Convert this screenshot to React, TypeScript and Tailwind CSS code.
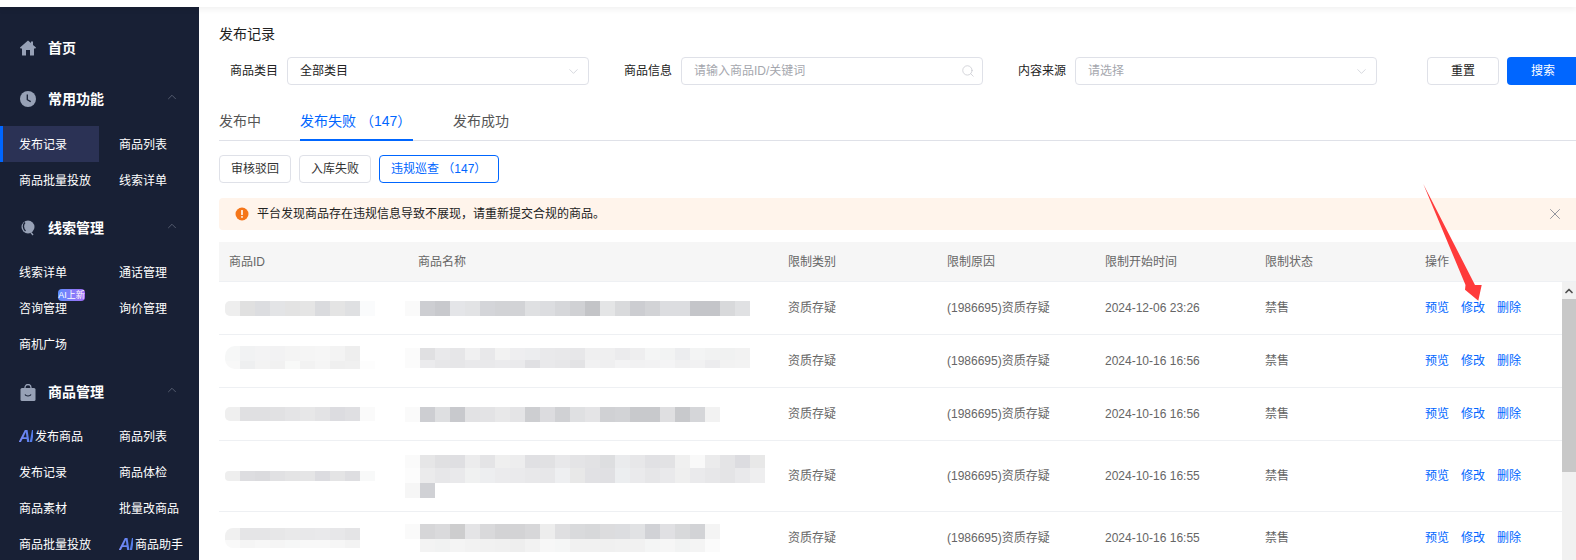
import React from "react";
import { ChevronDown, ChevronUp, Search, X } from "lucide-react";

type Line = [number, string];

const HomeIcon = () => (
  <svg width="16" height="16" viewBox="0 0 16 16" className="shrink-0">
    <path d="M8 .5 11 3.100V1.500h2v3.400L16 7.600l-.6.9H14V15a.5.5 0 0 1-.5.5H10V10H6v5.500H2.500A.5.5 0 0 1 2 15V8.500H.6L0 7.600z" fill="#97a1b6" />
  </svg>
);

const ClockIcon = () => (
  <svg width="16" height="16" viewBox="0 0 16 16" className="shrink-0">
    <circle cx="8" cy="8" r="8" fill="#97a1b6" />
    <path d="M7.300 3.500v5.200l3.400 1.900" fill="none" stroke="#182035" strokeWidth="1.300" />
  </svg>
);

const BubbleIcon = () => (
  <svg width="16" height="16" viewBox="0 0 16 16" className="shrink-0">
    <circle cx="8" cy="7" r="6.500" fill="#97a1b6" />
    <path d="M5 2.500c-2.200 2-2.200 6 .5 8.500" fill="none" stroke="#182035" strokeWidth="1.400" />
    <path d="M11 12.500l2 2.500" stroke="#97a1b6" strokeWidth="1.300" />
  </svg>
);

const BagIcon = () => (
  <svg width="16" height="17" viewBox="0 0 16 17" className="shrink-0">
    <path d="M5 5V3.500a3 3 0 0 1 6 0V5" fill="none" stroke="#97a1b6" strokeWidth="1.300" />
    <rect x="0.500" y="4" width="15" height="13" rx="1.500" fill="#97a1b6" />
    <path d="M5 10.500c1 2 5 2 6 0" fill="none" stroke="#182035" strokeWidth="1.200" />
  </svg>
);

const AiMark = () => (
  <span className="bg-gradient-to-r from-[#7a8cf8] to-[#4f7ae8] bg-clip-text font-['Liberation_Sans',sans-serif] text-[16px] font-bold italic leading-none tracking-[-1px] text-transparent">
    AI
  </span>
);

const SectionHead = ({ icon, title, open = true }: { icon: React.ReactNode; title: string; open?: boolean }) => (
  <div className="flex h-9 items-center pl-5 pr-5">
    <div className="flex w-7 items-center">{icon}</div>
    <span className="flex-1 text-sm font-bold text-white">{title}</span>
    {open && <ChevronUp size={14} strokeWidth={1.25} className="mb-1 text-[#6a7183]" />}
  </div>
);

const NavItem = ({ label, active, ai, badge }: { label: string; active?: boolean; ai?: boolean; badge?: boolean }) => (
  <div className={"relative flex h-9 items-center pt-px text-xs text-white " + (active ? "w-[99px] border-l-[3px] border-[#0066ff] bg-[#2b3255] pl-4" : "pl-[19px]")}>
    {ai && <AiMark />}
    {ai && <span className="w-[2px]" />}
    {label}
    {badge && (
      <span className="absolute left-[58px] top-[-1px] flex h-3 w-[27px] items-center justify-center rounded-sm bg-gradient-to-r from-[#5b8cff] to-[#a06cf5] text-[9px] leading-none text-white">
        AI上新
      </span>
    )}
  </div>
);

const NavGrid = ({ children }: { children: React.ReactNode }) => (
  <div className="grid grid-cols-[100px_99px]">{children}</div>
);

const Sidebar = () => (
  <aside className="w-[199px] shrink-0 overflow-hidden bg-[#182035] pt-[23px]">
    <SectionHead icon={<HomeIcon />} title="首页" open={false} />
    <div className="mt-[15px] mb-[9px]">
      <SectionHead icon={<ClockIcon />} title="常用功能" />
    </div>
    <NavGrid>
      <NavItem label="发布记录" active />
      <NavItem label="商品列表" />
      <NavItem label="商品批量投放" />
      <NavItem label="线索详单" />
    </NavGrid>
    <div className="mt-3 mb-2">
      <SectionHead icon={<BubbleIcon />} title="线索管理" />
    </div>
    <NavGrid>
      <NavItem label="线索详单" />
      <NavItem label="通话管理" />
      <NavItem label="咨询管理" badge />
      <NavItem label="询价管理" />
      <NavItem label="商机广场" />
    </NavGrid>
    <div className="mt-3 mb-2">
      <SectionHead icon={<BagIcon />} title="商品管理" />
    </div>
    <NavGrid>
      <NavItem label="发布商品" ai />
      <NavItem label="商品列表" />
      <NavItem label="发布记录" />
      <NavItem label="商品体检" />
      <NavItem label="商品素材" />
      <NavItem label="批量改商品" />
      <NavItem label="商品批量投放" />
      <NavItem label="商品助手" ai />
    </NavGrid>
  </aside>
);

const FieldLabel = ({ text, w }: { text: string; w: string }) => (
  <div className={"shrink-0 pr-[9px] text-right text-xs text-[#222] " + w}>{text}</div>
);

const FieldBox = ({ text, muted, icon }: { text: string; muted?: boolean; icon: "down" | "search" }) => (
  <div className="flex h-7 w-[302px] shrink-0 items-center justify-between rounded border border-[#dfe1e8] pl-3 pr-[7px]">
    <span className={"text-xs " + (muted ? "text-[#a5a7ae]" : "text-[#222]")}>{text}</span>
    {icon === "down" ? (
      <ChevronDown size={15} strokeWidth={1} className="text-[#bfc2cb]" />
    ) : (
      <Search size={14} strokeWidth={1.25} className="text-[#c5c7ce]" />
    )}
  </div>
);

const Filters = () => (
  <div className="mt-[13px] flex h-7 w-[1400px] items-center">
    <FieldLabel text="商品类目" w="w-[68px]" />
    <FieldBox text="全部类目" icon="down" />
    <FieldLabel text="商品信息" w="w-[92px]" />
    <FieldBox text="请输入商品ID/关键词" muted icon="search" />
    <FieldLabel text="内容来源" w="w-[92px]" />
    <FieldBox text="请选择" muted icon="down" />
    <button className="ml-[50px] h-7 w-[72px] shrink-0 rounded border border-[#dfe1e8] text-xs text-[#222]">重置</button>
    <button className="ml-2 h-7 w-[72px] shrink-0 rounded bg-[#0066ff] text-xs text-white">搜索</button>
  </div>
);

const Tabs = () => (
  <div className="mt-[22px] flex h-[34px] gap-10 border-b border-[#dfe1e8] text-sm text-[#555]">
    <span className="-mr-px h-[34px] leading-[28px]">发布中</span>
    <span className="h-[34px] w-[113px] whitespace-nowrap border-b-2 border-[#0066ff] leading-[28px] text-[#0066ff]">发布失败 （147）</span>
    <span className="h-[34px] leading-[28px]">发布成功</span>
  </div>
);

const SubTabs = () => (
  <div className="mt-[14px] flex gap-2 text-xs">
    <div className="flex h-7 w-[72px] items-center justify-center rounded border border-[#dfe1e8] text-[#333]">审核驳回</div>
    <div className="flex h-7 w-[72px] items-center justify-center rounded border border-[#dfe1e8] text-[#333]">入库失败</div>
    <div className="flex h-7 w-[120px] items-center rounded border border-[#0066ff] pl-[11px] text-[#0066ff]">违规巡查 （147）</div>
  </div>
);

const Alert = () => (
  <div className="mt-[15px] flex h-8 items-center rounded-l bg-[#fff4eb] pl-4 pr-3 text-xs text-[#222]">
    <svg width="14" height="14" viewBox="0 0 14 14" className="mr-2 shrink-0">
      <circle cx="7" cy="7" r="6.500" fill="#f5761a" />
      <rect x="6.200" y="3" width="1.600" height="5" rx="0.500" fill="#fff" />
      <rect x="6.200" y="9" width="1.600" height="1.700" rx="0.500" fill="#fff" />
    </svg>
    <span className="flex-1">平台发现商品存在违规信息导致不展现，请重新提交合规的商品。</span>
    <X size={18} strokeWidth={1} className="text-[#6f7683]" />
  </div>
);

const Mosaic = ({ x, lines, round }: { x: string; lines: Line[]; round?: string }) => (
  <div className={"overflow-hidden " + x + " " + (round ?? "")}>
    {lines.map(([h, colors], i) => (
      <div key={i} className="flex">
        {colors.split(" ").map((c, j) => (
          <div key={j} className="w-[15px] shrink-0" style={{ height: h, backgroundColor: "#" + c }} />
        ))}
      </div>
    ))}
  </div>
);

const cols = "grid grid-cols-[189px_370px_159px_158px_160px_160px_1fr] px-[10px]";

type Row = {
  h: string;
  id: Line[];
  idRound?: string;
  name: Line[];
  nameRound?: string;
  time: string;
};

const rows: Row[] = [
  {
    h: "h-[53px]",
    id: [[15, "eeeeee e0e0e0 dcdde0 e3e4e6 e3e3e3 e5e5e5 dadbde e4e4e4 dfe0e2 fafbfc"]],
    idRound: "rounded-l-[5px]",
    name: [[15, "fafafa cdced2 c8c9cd e4e5e8 e2e3e5 d4d5d9 d2d3d6 d2d3d6 dfe0e2 dcdde0 d6d7da d0d1d4 c3c4c7 e4e5e6 d9dadc cccdd1 d2d3d6 dcdde0 dcdde0 c4c5c9 c4c5c9 d8d9db e0e1e3"]],
    time: "2024-12-06 23:26",
  },
  {
    h: "h-[53px]",
    id: [
      [15, "f6f7f7 f1f2f3 f3f3f4 f2f2f3 f4f4f4 f5f5f5 f6f6f6 f3f3f3 eeeeee"],
      [8, "f8f8f8 eeeff0 f3f3f3 f1f1f1 f8f9f8 f2f2f2 f5f5f5 efefef f0f0f0 fdfdfd"],
    ],
    idRound: "rounded-l-[10px] mb-[7px]",
    name: [
      [12, "fbfbfb e0e0e2 e9e9eb e6e6e8 f0f0f1 e8e8ea f2f2f2 eeeef0 ecedef e9e9eb e8e8ea e7e7e9 efeff0 efeff0 ebebed eeeeef f4f5f5 f2f3f3 ecedef f3f4f4 f1f2f2 f0f1f1 f2f2f2"],
      [8, "fbfbfb ebebed e7e7e9 e6e6e8 e9e9eb e9e9eb ebebed eaeaec e0e0e3 e9e9eb e7e7e9 e3e3e5 f1f1f2 efeff0 f3f3f4 f1f1f2 f2f2f3 f4f4f5 f0f0f1 f1f1f2 ececee f2f2f2 f3f3f3"],
    ],
    nameRound: "mb-[7px]",
    time: "2024-10-16 16:56",
  },
  {
    h: "h-[53px]",
    id: [[14, "efefef e0e0e2 e0e0e2 e1e1e3 e4e4e6 e7e7e8 e3e3e5 dcdce0 dfdfe2 fafafa"]],
    idRound: "rounded-l-[5px]",
    name: [[15, "fafafa cdced2 dedfe1 c8c9cd e2e2e4 e3e3e5 e8e8e9 e4e4e6 cdced1 dcdcdf d0d1d4 dfe0e2 e4e4e6 d0d1d4 d2d3d6 c8c9cc c8c9cc dfdfe1 c8c9cc d5d6d9 f2f2f2"]],
    time: "2024-10-16 16:56",
  },
  {
    h: "h-[71px]",
    id: [[10, "eeeeee dddde0 dbdbde e1e1e3 e4e4e5 e5e5e6 dcdce0 e4e4e5 dedee1 f8f9f9"]],
    idRound: "rounded-l-[4px]",
    name: [
      [13, "fafafa e6e6e7 e0e0e2 dfdfe2 ececed e4e4e6 efefef ededee e0e0e3 e1e1e3 e8e8ea e4e4e6 e2e2e4 dddee0 eaebed e7e7e9 e1e1e4 e2e2e4 f0f0f0 f9f9f9 ebebec e4e4e6 dcdce0 e8e8e8"],
      [15, "fcfcfc ebebec e7e7e9 e9e9eb f0f1f1 edeef0 ebebed eaeaec e8e8ea e7e7e9 eeeff1 e8e8e8 e1e1e4 e0e0e3 eceef0 eaeaec e6e6e8 e9e9eb efefef eaeaec e7e7e9 e4e4e6 e9e9eb eeeeef"],
      [15, "f6f6f6 d0d1d5"],
    ],
    time: "2024-10-16 16:55",
  },
  {
    h: "h-[53px]",
    id: [
      [12, "f0f0f0 e5e5e7 e5e5e7 e7e7e8 e9e9ea e8e8ea e9e9eb e7e7e9 e4e4e6"],
      [8, "f9f9f9 f5f5f5 f7f7f7 f5f5f5 f6f7f7 f8f8f8 f8f8f8 f6f6f6 f3f3f3"],
    ],
    idRound: "rounded-l-[8px]",
    name: [
      [15, "fafafa d6d6d8 dadadc cdcdce e4e4e6 d9d9db d3d3d5 d3d3d5 d7d7d9 ededed dfdfe1 d9dadc d7d8da dcdcde dcdde0 e1e2e4 d1d2d6 e0e0e3 d8d9db d2d3d6 f4f4f4"],
      [13, "ffffff f3f3f3 f1f2f2 f4f4f4 f2f2f2 f1f1f1 f0f0f0 eeeeee f2f2f2 f7f7f7 f5f6f6 f1f1f1 f1f1f1 f0f0f0 f1f1f1 f1f1f1 f4f5f5 f6f6f6 f2f3f3 f4f4f4 fbfbfb"],
    ],
    time: "2024-10-16 16:55",
  },
];

const Table = () => (
  <div className="mt-3">
    <div className={cols + " h-10 items-center border-b border-[#eef0f3] bg-[#f6f6f6] text-xs text-[#666]"}>
      <span>商品ID</span>
      <span>商品名称</span>
      <span>限制类别</span>
      <span>限制原因</span>
      <span>限制开始时间</span>
      <span>限制状态</span>
      <span>操作</span>
    </div>
    <div className="flex">
      <div className="min-w-0 flex-1">
        {rows.map((r, i) => (
          <div key={i} className={cols + " items-center border-b border-[#eef0f3] text-xs text-[#666] " + r.h}>
            <Mosaic x="ml-[-4px]" lines={r.id} round={r.idRound} />
            <Mosaic x="ml-[-13px]" lines={r.name} round={r.nameRound} />
            <span>资质存疑</span>
            <span>(1986695)资质存疑</span>
            <span>{r.time}</span>
            <span>禁售</span>
            <span className="flex gap-3 text-[#0066ff]">
              <span>预览</span>
              <span>修改</span>
              <span>删除</span>
            </span>
          </div>
        ))}
      </div>
      <div className="w-[14px] shrink-0 bg-[#f1f1f1]">
        <div className="flex h-[17px] items-center justify-center">
          <ChevronUp size={12} strokeWidth={3.5} className="text-[#505050]" />
        </div>
        <div className="h-[173px] bg-[#c8c8c8]" />
      </div>
    </div>
  </div>
);

const RedArrow = () => (
  <svg width="70" height="125" viewBox="0 0 70 125" className="absolute left-[1420px] top-[180px]">
    <path d="M3.300 4 55 105 61.700 105 58.300 120.700 45 109.700 45.500 105z" fill="#ff3b3b" />
  </svg>
);

export default function App() {
  return (
    <div className="relative flex h-[560px] w-[1576px] flex-col overflow-hidden bg-white font-['Liberation_Sans','Noto_Sans_CJK_SC',sans-serif]">
      <div className="relative z-10 h-[7px] shrink-0 bg-white shadow-[0_2px_6px_rgba(0,0,0,0.07)]" />
      <div className="flex min-h-0 flex-1">
        <Sidebar />
        <main className="min-w-0 flex-1 overflow-hidden pl-5">
          <h1 className="mt-[17px] text-sm font-normal leading-5 text-[#222]">发布记录</h1>
          <Filters />
          <Tabs />
          <SubTabs />
          <Alert />
          <Table />
        </main>
      </div>
      <RedArrow />
    </div>
  );
}
